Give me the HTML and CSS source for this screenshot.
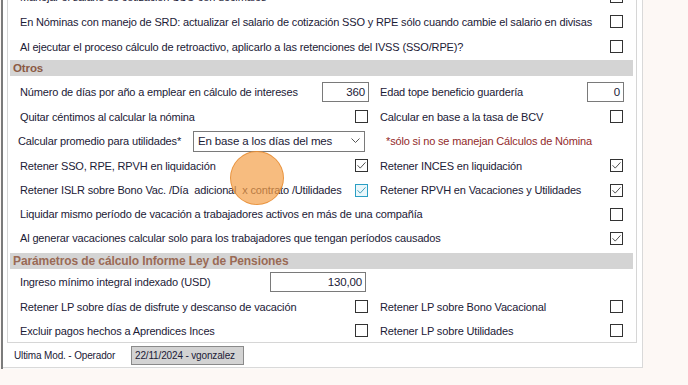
FILE: index.html
```html
<!DOCTYPE html>
<html lang="es">
<head>
  <meta charset="UTF-8" />
  <title>Parámetros de nómina</title>
  <link rel="stylesheet" href="styles.css">
</head>
<body>

  <div class="screen">
    <div class="panel">
      <div class="group">

        <div class="row tall">
          <span class="lbl">Manejar el salario de cotización SSO con decimales</span>
          <span class="chk"></span>
        </div>
        <div class="row tall">
          <span class="lbl">En Nóminas con manejo de SRD: actualizar el salario de cotización SSO y RPE sólo cuando cambie el salario en divisas</span>
          <span class="chk"></span>
        </div>
        <div class="row tall">
          <span class="lbl">Al ejecutar el proceso cálculo de retroactivo, aplicarlo a las retenciones del IVSS (SSO/RPE)?</span>
          <span class="chk"></span>
        </div>

        <div class="bar bar-otros">Otros</div>

        <div class="row">
          <div class="half left">
            <span class="lbl">Número de días por año a emplear en cálculo de intereses</span>
            <span class="num num-dias">360</span>
          </div>
          <div class="half right">
            <span class="lbl">Edad tope beneficio guardería</span>
            <span class="num num-edad">0</span>
          </div>
        </div>
        <div class="row tall">
          <div class="half left">
            <span class="lbl">Quitar céntimos al calcular la nómina</span>
            <span class="chk"></span>
          </div>
          <div class="half right">
            <span class="lbl">Calcular en base a la tasa de BCV</span>
            <span class="chk"></span>
          </div>
        </div>
        <div class="row">
          <div class="half left">
            <span class="lbl lbl-promedio">Calcular promedio para utilidades*</span>
            <span class="combo">
              <span>En base a los días del mes</span>
              <svg width="9" height="6" viewBox="0 0 9 6"><path d="M0.5 0.5 L4.5 4.5 L8.5 0.5" fill="none" stroke="#555" stroke-width="1"/></svg>
            </span>
          </div>
          <div class="half right">
            <span class="note">*sólo si no se manejan Cálculos de Nómina</span>
          </div>
        </div>
        <div class="row tall">
          <div class="half left">
            <span class="lbl">Retener SSO, RPE, RPVH en liquidación</span>
            <span class="chk on"><svg viewBox="0 0 13 13"><path d="M1.8 6.2 L5 9.6 L11.2 2.8"/></svg></span>
          </div>
          <div class="half right">
            <span class="lbl">Retener INCES en liquidación</span>
            <span class="chk on"><svg viewBox="0 0 13 13"><path d="M1.8 6.2 L5 9.6 L11.2 2.8"/></svg></span>
          </div>
        </div>
        <div class="row">
          <div class="half left">
            <span class="lbl">Retener ISLR sobre Bono Vac. /Día &nbsp;adicional &nbsp;x contrato /Utilidades</span>
            <span class="chk on hot"><svg viewBox="0 0 13 13"><path d="M1.8 6.2 L5 9.6 L11.2 2.8"/></svg></span>
          </div>
          <div class="half right">
            <span class="lbl">Retener RPVH en Vacaciones y Utilidades</span>
            <span class="chk on"><svg viewBox="0 0 13 13"><path d="M1.8 6.2 L5 9.6 L11.2 2.8"/></svg></span>
          </div>
        </div>
        <div class="row">
          <span class="lbl">Liquidar mismo período de vacación a trabajadores activos en más de una compañía</span>
          <span class="chk"></span>
        </div>
        <div class="row">
          <span class="lbl">Al generar vacaciones calcular solo para los trabajadores que tengan períodos causados</span>
          <span class="chk on"><svg viewBox="0 0 13 13"><path d="M1.8 6.2 L5 9.6 L11.2 2.8"/></svg></span>
        </div>

        <div class="bar bar-ley">Parámetros de cálculo Informe Ley de Pensiones</div>

        <div class="row">
          <div class="half left">
            <span class="lbl">Ingreso mínimo integral indexado (USD)</span>
            <span class="num num-ingreso">130,00</span>
          </div>
        </div>
        <div class="row tall">
          <div class="half left">
            <span class="lbl">Retener LP sobre días de disfrute y descanso de vacación</span>
            <span class="chk"></span>
          </div>
          <div class="half right">
            <span class="lbl">Retener LP sobre Bono Vacacional</span>
            <span class="chk"></span>
          </div>
        </div>
        <div class="row row-last">
          <div class="half left">
            <span class="lbl">Excluir pagos hechos a Aprendices Inces</span>
            <span class="chk"></span>
          </div>
          <div class="half right">
            <span class="lbl">Retener LP sobre Utilidades</span>
            <span class="chk"></span>
          </div>
        </div>

      </div>

      <div class="footer">
        <span class="footer-lbl">Ultima Mod. - Operador</span>
        <span class="footer-box">22/11/2024 - vgonzalez</span>
      </div>
    </div>

    <!-- marcador del clic -->
    <div class="click-dot"></div>
  </div>

</body>
</html>
```

FILE: styles.css
```css
body {
  margin: 0;
  font-family: "Liberation Sans", Arial, sans-serif;
  font-size: 11px;
  letter-spacing: -0.15px;
  color: #1b2036;
  background-color: #fdf8f5;
  overflow: hidden;
}

.screen {
  position: relative;
  height: 385px;
  margin-left: 1px;
  border-left: 2px solid #7b7b7b;
  background: linear-gradient(90deg, #fafafa 0%, #fdf8f5 95%);
}

.panel {
  width: 639px;
  background: #ffffff;
  border-right: 1px solid #d9d9d9;
  border-bottom: 1px solid #d9d9d9;
}

.group {
  margin: -16px 5px 0 4px;
  border: 1px solid #d6d6d6;
  border-top: none;
}

.row {
  display: flex;
  align-items: center;
  justify-content: space-between;
  height: 24px;
  padding: 0 12px;
}

.row.tall {
  height: 25px;
}

.row-last {
  height: 23px;
}

.lbl {
  white-space: nowrap;
}

.lbl-promedio {
  margin-left: -2px;
}

.half {
  display: flex;
  align-items: center;
  justify-content: space-between;
}

.half.left {
  width: 349px;
}

.half.right {
  width: 244px;
  margin-left: auto;
}

.bar {
  height: 16px;
  line-height: 16px;
  margin: 1px 3px 4px 2px;
  padding-left: 3px;
  background: #d4d4d4;
  font-weight: bold;
  font-size: 11.5px;
  letter-spacing: -0.1px;
  color: #8b5a44;
}

.bar-ley {
  margin-top: 3px;
  margin-bottom: 1px;
  font-size: 12px;
  color: #9a6a55;
}

/* casillas */
.chk {
  display: inline-block;
  width: 11px;
  height: 11px;
  margin-right: 1px;
  border: 1px solid #333333;
  background: #ffffff;
  flex-shrink: 0;
}

.chk svg {
  display: block;
  width: 11px;
  height: 11px;
  overflow: visible;
}

.chk svg path {
  fill: none;
  stroke: #333333;
  stroke-width: 1;
}

.chk.hot {
  border-color: #2a9fc4;
  background: #eaf7fb;
}

.chk.hot svg path {
  stroke: #2a8fae;
}

/* campos */
.num {
  display: inline-block;
  height: 18px;
  line-height: 18px;
  padding-right: 3px;
  border: 1px solid #7a7a7a;
  background: #ffffff;
  text-align: right;
  font-size: 11.5px;
  box-sizing: content-box;
}

.num-dias {
  width: 42px;
}

.num-edad {
  width: 32px;
}

.num-ingreso {
  width: 91px;
  margin-right: 3px;
}

.combo {
  display: flex;
  align-items: center;
  justify-content: space-between;
  width: 162px;
  height: 19px;
  margin-right: 4px;
  padding: 0 4px 0 4px;
  border: 1px solid #7a7a7a;
  background: #ffffff;
  font-size: 11.5px;
}

.note {
  margin-left: 6px;
  color: #922a2a;
}

/* pie */
.footer {
  display: flex;
  align-items: center;
  height: 24px;
  padding-left: 11px;
  font-size: 10px;
}

.footer-lbl {
  width: 117px;
  white-space: nowrap;
}

.footer-box {
  width: 108px;
  height: 17px;
  line-height: 17px;
  padding-left: 3px;
  border: 1px solid #8a8a8a;
  background: #d3d3d3;
  white-space: nowrap;
}

.click-dot {
  position: absolute;
  left: 227px;
  top: 167px;
  width: 52px;
  height: 52px;
  border-radius: 50%;
  background: rgba(244, 160, 72, 0.7);
  border: 1px solid rgba(230, 140, 50, 0.85);
}
```
